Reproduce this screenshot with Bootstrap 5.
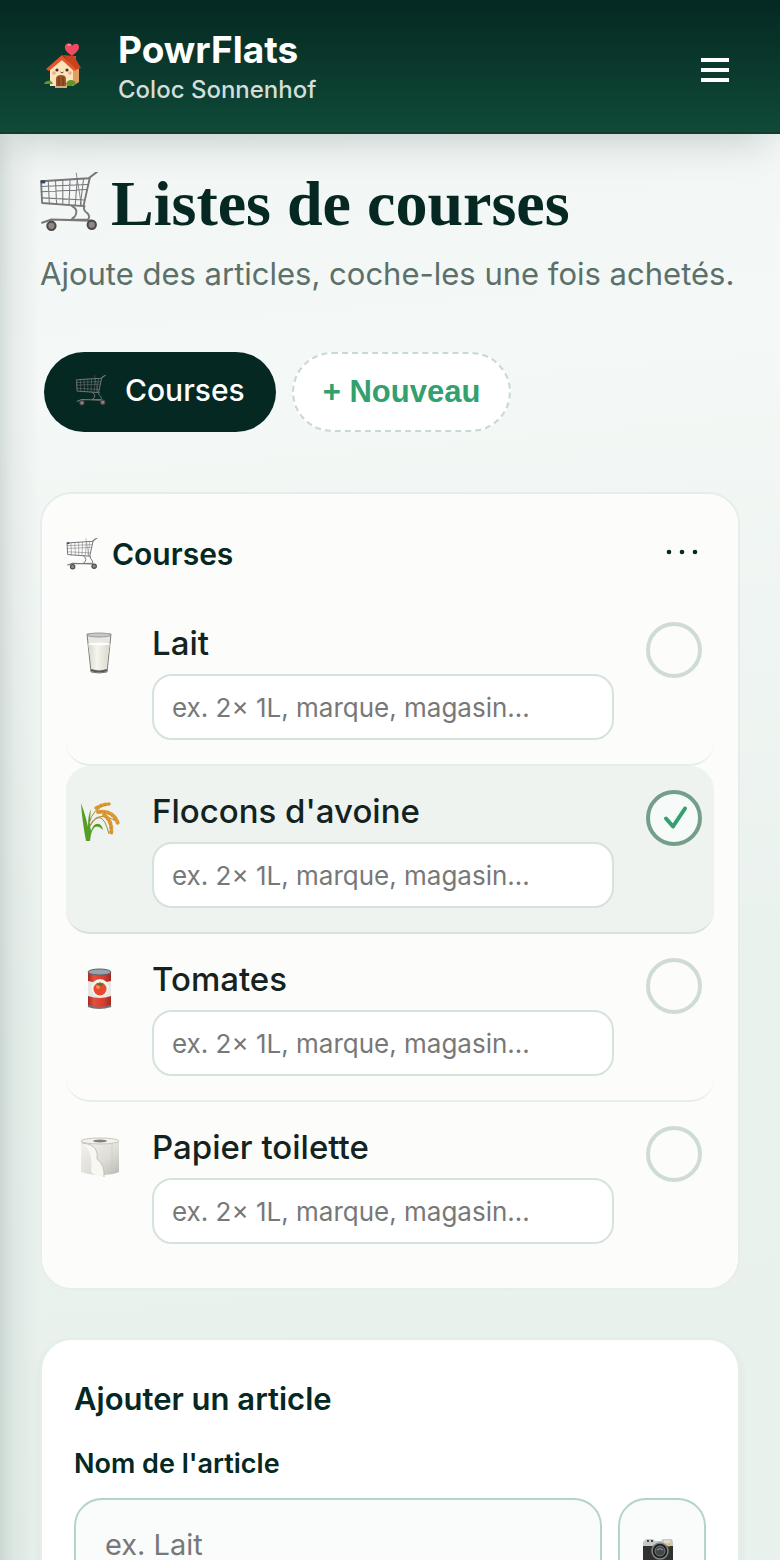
<!DOCTYPE html>
<html lang="fr">
<head>
  <meta charset="UTF-8">
  <meta name="viewport" content="width=device-width, initial-scale=1">
  <title>PowrFlats - Listes de courses</title>
  <link href="https://cdn.jsdelivr.net/npm/bootstrap@5.3.0/dist/css/bootstrap.min.css" rel="stylesheet">
  <style>
    :root {
      --ink: #052822;
      --line: #d5e2de;
      --soft: #e6eeea;
      --green: #33a06f;
    }
    body {
      font-family: Inter, "Liberation Sans", sans-serif;
      color: #14231f;
      background:
        linear-gradient(90deg, rgba(5, 40, 34, .13), rgba(5, 40, 34, .05) 14px, transparent 40px),
        linear-gradient(175deg, #f0f5f4 0, #f4f8f6 24%, #eaf2ee 62%, #e8f1ec 100%);
    }
    .app-bar {
      min-height: 134px;
      padding: 0 40px;
      background: linear-gradient(180deg, #052822, #0f4a38);
      border-bottom: 2px solid #17392f;
      box-shadow: 0 16px 40px -12px rgba(5, 40, 34, .22);
      z-index: 2;
    }
    .brand { font-size: 37px; line-height: 48px; font-weight: 700; }
    .brand-sub { font-size: 24px; line-height: 32px; font-weight: 500; color: #d3dedb; }
    .app-main { padding: 36px 40px 40px; scrollbar-width: none; }
    .app-main::-webkit-scrollbar { display: none; }
    .page-title {
      font-family: "Liberation Serif", serif;
      font-size: 64px;
      line-height: 68px;
      font-weight: 700;
      color: var(--ink);
      gap: 13px;
    }
    .page-sub { font-size: 31px; line-height: 48px; color: #5c706a; margin: 12px 0 54px; white-space: nowrap; }
    .list-tabs { padding: 0 4px; gap: 16px; margin-bottom: 60px; }
    .pill { height: 80px; border-radius: 40px; font-size: 30px; padding: 0 31px; border: 0; }
    .pill-on { background: var(--ink); color: #fff; font-weight: 500; gap: 18px; padding-bottom: 4px; }
    .pill-new {
      background: #fff;
      border: 2px dashed #c8d9d4;
      color: var(--green);
      font-family: "Liberation Sans", sans-serif;
      font-size: 31px;
      font-weight: 700;
      padding: 0 29px;
    }
    .panel { border: 2px solid var(--soft); border-radius: 32px; background: #fcfdfb; padding: 24px 24px 20px; margin-bottom: 48px; }
    .panel-head { height: 72px; margin-bottom: 8px; }
    .panel-name { font-size: 30px; font-weight: 600; color: var(--ink); gap: 14px; }
    .plain-btn { background: none; border: 0; padding: 0 12px; color: var(--ink); }
    .item { padding: 24px 12px; gap: 32px; border-bottom: 2px solid var(--soft); border-radius: 24px; }
    .item:last-child { border-bottom: 0; }
    .item-done { background: #eef3f0; border-color: var(--line); }
    .item-icon { width: 42px; height: 62px; }
    .item-name { font-size: 33px; line-height: 42px; font-weight: 500; margin-bottom: 10px; display: block; }
    .item-note {
      height: 66px;
      border: 2px solid var(--line);
      border-radius: 20px;
      font-size: 26px;
      padding: 0 18px;
      color: #14231f;
    }
    .item-note::placeholder, .add-input::placeholder { color: #787878; }
    .item-check.form-check-input {
      width: 56px;
      height: 56px;
      margin: 0;
      border: 4px solid #cfdcd6;
      border-radius: 50%;
      background-color: transparent;
    }
    .item-check.form-check-input:checked {
      border-color: #749e8c;
      background: #f6faf9 url("data:image/svg+xml,%3Csvg xmlns='http://www.w3.org/2000/svg' viewBox='0 0 48 48'%3E%3Cpath d='M16 24.5l7 8 12-18' fill='none' stroke='%2333a06f' stroke-width='4' stroke-linecap='round' stroke-linejoin='round'/%3E%3C/svg%3E") center / 48px no-repeat;
    }
    .panel-add { background: #fff; padding: 32px; box-shadow: 0 4px 8px rgba(5, 40, 34, .06); }
    .add-title { font-size: 31px; line-height: 54px; font-weight: 600; color: var(--ink); margin-bottom: 16px; }
    .add-label { font-size: 27px; line-height: 44px; font-weight: 600; color: var(--ink); margin-bottom: 12px; }
    .add-input, .photo-btn { height: 92px; border: 2px solid #b3d4c6; border-radius: 28px; background: #fafcfb; }
    .add-input { font-size: 29px; padding: 0 29px; }
    .photo-btn { width: 88px; padding: 16px 0 0; }
  </style>
</head>
<body class="vh-100 d-flex flex-column overflow-hidden">

<!-- Shared drawings -->
<svg class="position-absolute" width="0" height="0" aria-hidden="true">
  <symbol id="cart" viewBox="0 0 56 58">
    <g fill="none" stroke="#77777a" stroke-linecap="round" stroke-linejoin="round">
      <path d="M1 9l46-3 8-6" stroke-width="2"/>
      <path d="M1 9l1 21 40 3 6-27" stroke-width="1.8"/>
      <path d="M1 14l45-2M1 19l44-2M2 25l41 2M8 9l1 22M15 9l1 22M22 8v23M29 8l-1 23M36 7l-2 25M42 7l-3 25" stroke-width="1"/>
      <path d="M35 1l5 31" stroke-width=".8"/>
      <path d="M31 33q5 3 4 6 0 4-4 6M43 33q-2 4 3 7 3 4 0 6H31" stroke-width="1.8"/>
      <path d="M2 49l9-3 38 1" stroke-width="2"/>
    </g>
    <path d="M1 8h4v3H1z" fill="#284766"/>
    <circle cx="11" cy="52" r="4" fill="#8e8784" stroke="#4e4847" stroke-width="2"/>
    <circle cx="50" cy="51" r="4" fill="#8e8784" stroke="#4e4847" stroke-width="2"/>
  </symbol>
  <linearGradient id="milk" x1="0" x2="1" y1="0" y2="0">
    <stop offset="0" stop-color="#d8d6cc"/><stop offset=".4" stop-color="#f6f5ee"/><stop offset="1" stop-color="#d9d7cd"/>
  </linearGradient>
  <linearGradient id="can" x1="0" x2="1" y1="0" y2="0">
    <stop offset="0" stop-color="#a82a20"/><stop offset=".25" stop-color="#e2513f"/><stop offset=".7" stop-color="#d63c2d"/><stop offset="1" stop-color="#a5281f"/>
  </linearGradient>
  <linearGradient id="paper" x1="0" x2="1" y1="0" y2="1">
    <stop offset="0" stop-color="#f4f3f0"/><stop offset=".6" stop-color="#dddcd6"/><stop offset="1" stop-color="#b9b8b1"/>
  </linearGradient>
</svg>

<header class="app-bar d-flex align-items-center position-relative text-white">
  <svg width="46" height="50" viewBox="0 0 46 50" class="flex-shrink-0" aria-hidden="true">
    <path d="M31 15h5v12h-5z" fill="#e8b68a"/>
    <path d="M31 15h5v3h-5z" fill="#c6593b"/>
    <path d="M32 15c-4-3-8-6-7-10 2-4 6-3 7 0 2-3 7-3 7 1 0 4-4 6-7 9z" fill="#ef4963"/>
    <path d="M28 5q1-2 3-1" stroke="#ff97a5" stroke-width="1.5" fill="none"/>
    <path d="M10 27l11-9 12 10v17H10z" fill="#fbe3ba"/>
    <path d="M33 28l6-2v15l-6 4z" fill="#dfa063"/>
    <path d="M23 14l11 1 7 12-6 2z" fill="#c7431f"/>
    <path d="M6 28l16-14 15 15-3 1-12-11L9 30z" fill="#e8542a"/>
    <circle cx="17" cy="29" r="1.6" fill="#4c3026"/><circle cx="27" cy="29" r="1.6" fill="#4c3026"/>
    <circle cx="14" cy="32" r="1.8" fill="#f4a495"/><circle cx="30" cy="32" r="1.8" fill="#f4a495"/>
    <path d="M20.500 31q1.500 2 3 0" stroke="#6b4332" fill="none"/>
    <path d="M16 45v-7q0-4 5-4t5 4v7z" fill="#9c5327"/>
    <path d="M19 36v9M23 36v9" stroke="#6e3517"/>
    <path d="M15 45h12v2H15z" fill="#d6ac7c"/>
    <path d="M4 43q1-3 4-3 3-2 5 3zM26 43q1-4 5-4 4 0 5 4l-4 2h-5z" fill="#62952b"/>
  </svg>
  <div class="flex-grow-1 ms-4">
    <div class="brand ms-2">PowrFlats</div>
    <div class="brand-sub ms-2">Coloc Sonnenhof</div>
  </div>
  <button type="button" class="plain-btn text-white pe-2 pt-2" aria-label="Menu">
    <svg width="32" height="28" viewBox="0 0 32 28" fill="currentColor" aria-hidden="true">
      <path d="M1 2h28v4H1zM1 12h28v4H1zM1 22h28v4H1z"/>
    </svg>
  </button>
</header>

<main class="app-main flex-grow-1 overflow-auto">
  <h1 class="page-title d-flex align-items-center mb-0">
    <svg width="58" height="60" class="mb-1 flex-shrink-0" aria-hidden="true"><use href="#cart"/></svg>Listes de courses
  </h1>
  <p class="page-sub">Ajoute des articles, coche-les une fois achetés.</p>

  <div class="list-tabs d-flex">
    <button type="button" class="pill pill-on d-flex align-items-center">
      <svg width="32" height="31" aria-hidden="true"><use href="#cart"/></svg>Courses
    </button>
    <button type="button" class="pill pill-new">+ Nouveau</button>
  </div>

  <section class="panel">
    <div class="panel-head d-flex align-items-center justify-content-between">
      <h2 class="panel-name d-flex align-items-center mb-0">
        <svg width="32" height="32" aria-hidden="true"><use href="#cart"/></svg>Courses
      </h2>
      <button type="button" class="plain-btn" aria-label="Options de la liste">
        <svg width="38" height="30" viewBox="0 0 38 30" fill="currentColor" aria-hidden="true">
          <circle cx="5" cy="13" r="2.300"/><circle cx="18" cy="13" r="2.300"/><circle cx="31" cy="13" r="2.300"/>
        </svg>
      </button>
    </div>

    <div class="item d-flex align-items-start">
      <svg class="item-icon flex-shrink-0" viewBox="0 0 42 62" aria-hidden="true">
        <path d="M9 12l4 38q8 2 16 0l4-38z" fill="#e7e8e5" stroke="#7b7d7d"/>
        <path d="M10 22q11 3 22 0l-4 24q-7 3-14 0z" fill="url(#milk)"/>
        <ellipse cx="21" cy="13" rx="12" ry="2" fill="#c6c9c7" stroke="#9b9e9c"/>
        <ellipse cx="21" cy="22" rx="11" ry="1.500" fill="#fffef8"/>
        <path d="M13 48q8 3 16 0" stroke="#595b5b" stroke-width="2" fill="none"/>
      </svg>
      <div class="flex-grow-1">
        <label class="item-name" for="done1">Lait</label>
        <input type="text" class="item-note form-control" placeholder="ex. 2× 1L, marque, magasin..." aria-label="Note pour Lait">
      </div>
      <input type="checkbox" class="item-check form-check-input flex-shrink-0" id="done1">
    </div>

    <div class="item item-done d-flex align-items-start">
      <svg class="item-icon flex-shrink-0" viewBox="0 0 42 62" aria-hidden="true">
        <path d="M8 51Q4 30 3 13q5 14 7 24 0-12 3-18-2 14 0 22 3-9 8-7 3 1 4 6-4-5-8-3-4 3-5 14z" fill="#559d25"/>
        <path d="M11 34Q14 18 31 14M12 36Q18 20 38 31M12 36Q24 16 31 44" fill="none" stroke="#a58b34"/>
        <g fill="none" stroke="#dc9834" stroke-linecap="round" stroke-dasharray="2 2.500">
          <path d="M18 18Q25 14 31 14" stroke-width="3.500"/>
          <path d="M20 22Q36 20 40 34" stroke-width="4"/>
          <path d="M26 25Q35 31 33 45" stroke-width="4"/>
        </g>
        <path d="M19 18l12-4M22 22q12 1 16 10M28 27q6 5 5 16" stroke="#b8731d" stroke-dasharray="1 3" fill="none"/>
      </svg>
      <div class="flex-grow-1">
        <label class="item-name" for="done2">Flocons d'avoine</label>
        <input type="text" class="item-note form-control" placeholder="ex. 2× 1L, marque, magasin..." aria-label="Note pour Flocons d'avoine">
      </div>
      <input type="checkbox" class="item-check form-check-input flex-shrink-0" id="done2" checked>
    </div>

    <div class="item d-flex align-items-start">
      <svg class="item-icon flex-shrink-0" viewBox="0 0 42 62" aria-hidden="true">
        <path d="M10 14h23v34q-11 4-23 0z" fill="url(#can)"/>
        <path d="M10 23q11 3 23 0v15q-11 4-23 0z" fill="#e5e7e5"/>
        <circle cx="22" cy="30" r="9" fill="#f2f1ec"/>
        <circle cx="22" cy="31" r="6.500" fill="#e9482a"/>
        <circle cx="20" cy="29" r="2" fill="#ff8b60"/>
        <path d="M18 25l3 1 1-2 1 2 3-1-3 3h-2z" fill="#467b2e"/>
        <ellipse cx="21.500" cy="14" rx="11.500" ry="3" fill="#9aa2ac" stroke="#59636e"/>
        <path d="M10 48q11 4 23 0" stroke="#70747c" stroke-width="2" fill="none"/>
      </svg>
      <div class="flex-grow-1">
        <label class="item-name" for="done3">Tomates</label>
        <input type="text" class="item-note form-control" placeholder="ex. 2× 1L, marque, magasin..." aria-label="Note pour Tomates">
      </div>
      <input type="checkbox" class="item-check form-check-input flex-shrink-0" id="done3">
    </div>

    <div class="item d-flex align-items-start">
      <svg class="item-icon flex-shrink-0" viewBox="0 0 42 62" aria-hidden="true">
        <path d="M3 15v31q7 3 20 3 12 0 18-3V15z" fill="url(#paper)"/>
        <ellipse cx="22" cy="15" rx="19" ry="3" fill="#f3f2ef" stroke="#c7c6c0"/>
        <ellipse cx="22" cy="15" rx="7" ry="1.500" fill="#8d7c70"/>
        <path d="M4 17q11 1 14 7 2 4 1 9 8 6 7 18-12-2-13-6Q16 26 4 17z" fill="#f8f7f4"/>
        <path d="M4 17q11 1 14 7 2 4 1 9 8 6 7 18" fill="none" stroke="#c3c2bb"/>
        <path d="M34 18v29" stroke="#c7c6bf" stroke-dasharray="1 1"/>
      </svg>
      <div class="flex-grow-1">
        <label class="item-name" for="done4">Papier toilette</label>
        <input type="text" class="item-note form-control" placeholder="ex. 2× 1L, marque, magasin..." aria-label="Note pour Papier toilette">
      </div>
      <input type="checkbox" class="item-check form-check-input flex-shrink-0" id="done4">
    </div>
  </section>

  <form class="panel panel-add">
    <h2 class="add-title">Ajouter un article</h2>
    <label class="add-label d-block" for="itemName">Nom de l'article</label>
    <div class="d-flex gap-3">
      <input type="text" class="add-input form-control" id="itemName" placeholder="ex. Lait">
      <button type="button" class="photo-btn flex-shrink-0" aria-label="Prendre une photo">
        <svg width="32" height="28" viewBox="0 0 32 28" class="me-2" aria-hidden="true">
          <path d="M1 4l3-3h7l2 2h6l2-2h9l1 3v5H1z" fill="#c7c8c7"/>
          <path d="M1 8h30v16q0 2-2 2H3q-2 0-2-2z" fill="#303232"/>
          <path d="M5 3h2M9 3h2" stroke="#444" stroke-width="2"/>
          <path d="M22 2h6v3h-6z" fill="#e4d9cc"/>
          <circle cx="18" cy="13" r="8" fill="#1d1f20" stroke="#858888" stroke-width="1.500"/>
          <circle cx="18" cy="13" r="5" fill="#414748" stroke="#777c7d"/>
          <path d="M15 12q3-3 6 0" stroke="#9da3a4" fill="none"/>
          <circle cx="27" cy="7" r="1.500" fill="#f0c32d"/>
        </svg>
      </button>
    </div>
  </form>
</main>

<script src="https://cdn.jsdelivr.net/npm/bootstrap@5.3.0/dist/js/bootstrap.bundle.min.js"></script>
</body>
</html>
